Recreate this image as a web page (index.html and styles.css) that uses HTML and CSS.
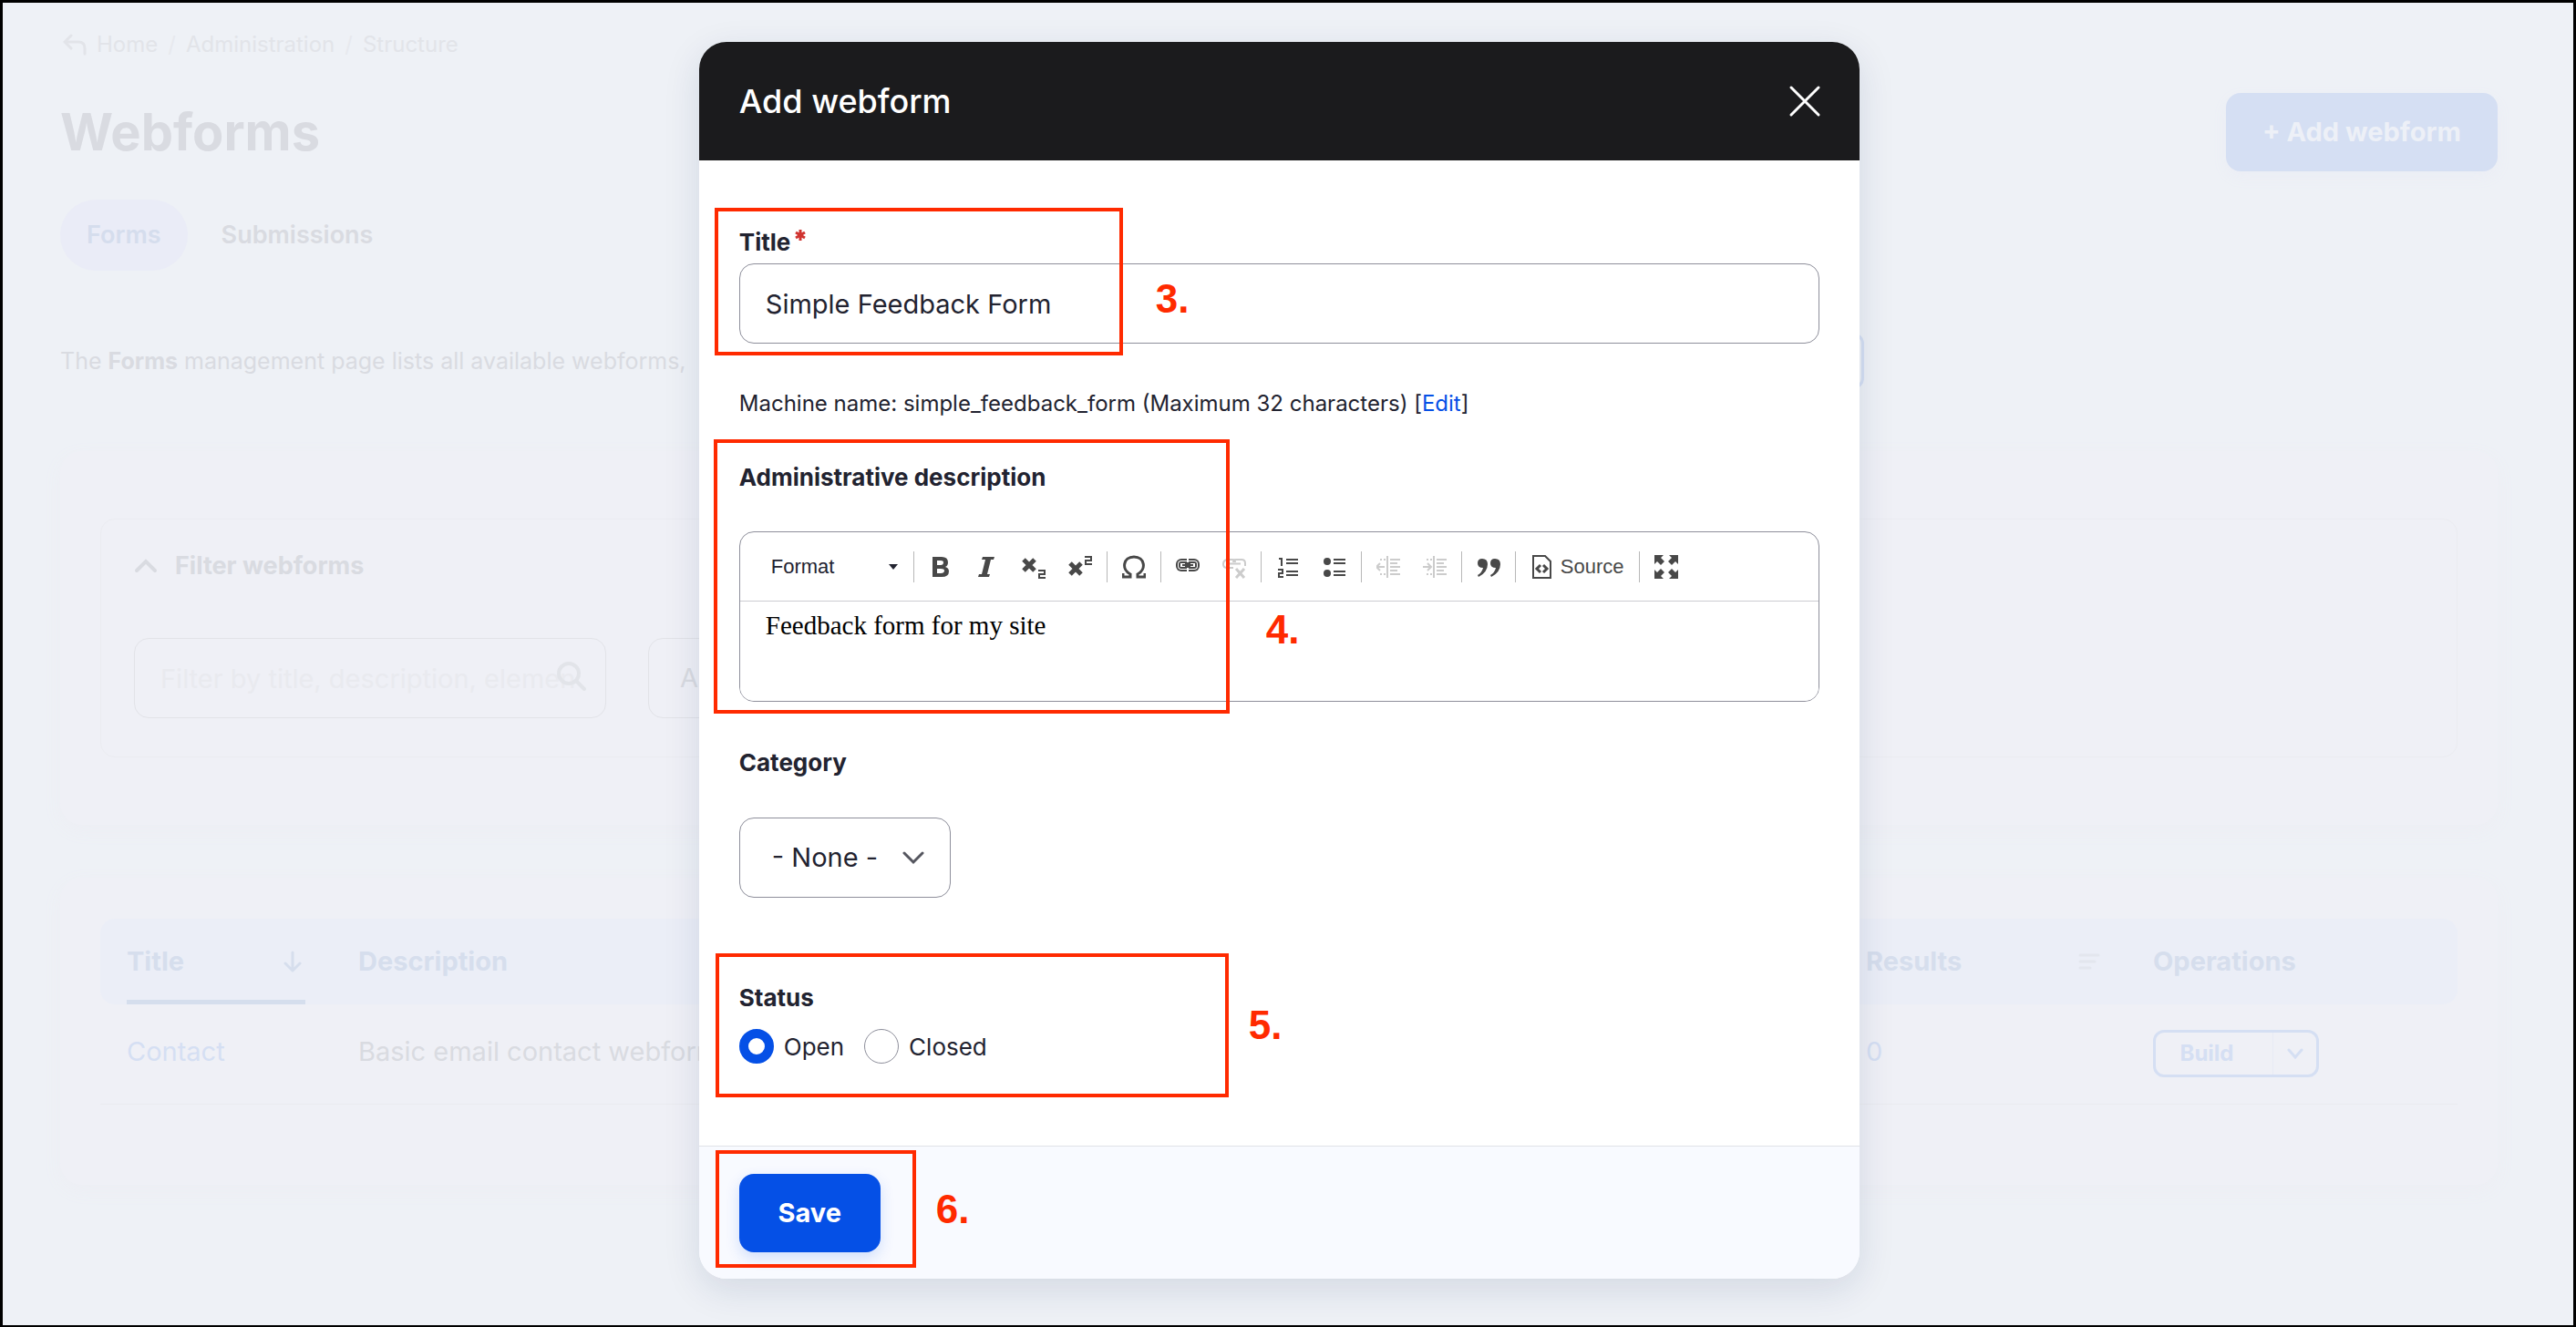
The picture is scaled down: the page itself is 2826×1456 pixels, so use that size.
FILE: index.html
```
<!DOCTYPE html>
<html lang="en">
<head>
<meta charset="utf-8">
<title>Add webform</title>
<link rel="stylesheet" href="styles.css">
</head>
<body>
<div class="page">
  <nav class="breadcrumb" aria-label="Breadcrumb">
    <svg width="26" height="24" viewBox="0 0 26 24" fill="none" stroke="currentColor" stroke-width="3" stroke-linecap="round" stroke-linejoin="round"><path d="M9 2 2 9l7 7M2 9h15q7 0 7 7v6"/></svg>
    <a href="#">Home</a><span class="slash">/</span><a href="#">Administration</a><span class="slash">/</span><a href="#">Structure</a>
  </nav>
  <header class="title-row">
    <h1>Webforms</h1>
    <button class="add-button" type="button">+ Add webform</button>
  </header>
  <nav class="tabs" aria-label="Tabs"><a class="active" href="#">Forms</a><a href="#">Submissions</a></nav>
  <div class="intro">
    <p>The <b>Forms</b> management page lists all available webforms,</p>
    <button class="video-button" type="button" aria-label="Video"></button>
  </div>
  <section class="card filter-card">
    <div class="filter">
      <h2>
        <svg width="26" height="16" viewBox="0 0 26 16" fill="none" stroke="currentColor" stroke-width="4" stroke-linecap="round"><path d="M3 13 13 3l10 10"/></svg>
        Filter webforms
      </h2>
      <div class="filter-fields">
        <div class="search">
          <input type="text" aria-label="Filter" placeholder="Filter by title, description, elemen">
          <svg width="32" height="32" viewBox="0 0 32 32" fill="none" stroke="currentColor" stroke-width="4" stroke-linecap="round"><circle cx="13" cy="13" r="11"/><path d="m21 21 9 9"/></svg>
        </div>
        <select aria-label="Category filter"><option>All</option></select>
      </div>
    </div>
  </section>
  <section class="card table-card">
    <table>
      <thead>
        <tr>
          <th class="col-title"><a class="sorted" href="#">Title
            <svg width="20" height="24" viewBox="0 0 20 24" fill="none" stroke="currentColor" stroke-width="3" stroke-linecap="round" stroke-linejoin="round"><path d="M10 2v20M2 14l8 8 8-8"/></svg></a></th>
          <th>Description</th>
          <th class="col-results"><a class="sortable" href="#">Results
            <svg width="24" height="18" viewBox="0 0 24 18" fill="none" stroke="currentColor" stroke-width="3" stroke-linecap="round"><path d="M2 2h20M2 9h16M2 16h11"/></svg></a></th>
          <th class="col-operations">Operations</th>
        </tr>
      </thead>
      <tbody>
        <tr>
          <td><a href="#">Contact</a></td>
          <td>Basic email contact webform.</td>
          <td><a href="#">0</a></td>
          <td>
            <div class="dropbutton">
              <button class="build" type="button">Build</button>
              <button class="toggle" type="button" aria-label="More"><svg width="18" height="12" viewBox="0 0 18 12" fill="none" stroke="currentColor" stroke-width="3" stroke-linecap="round"><path d="m2 2 7 8 7-8"/></svg></button>
            </div>
          </td>
        </tr>
      </tbody>
    </table>
  </section>
</div>

<div class="overlay">
  <form class="dialog" role="dialog" aria-labelledby="dialog-title">
    <header class="dialog-header">
      <h2 id="dialog-title">Add webform</h2>
      <button class="close" type="button" aria-label="Close"><svg width="36" height="36" viewBox="0 0 36 36" fill="none" stroke="currentColor" stroke-width="3" stroke-linecap="round"><path d="m3 3 30 30M33 3 3 33"/></svg></button>
    </header>
    <div class="dialog-body">
      <div class="field">
        <label for="title">Title<svg class="required" width="12" height="12" viewBox="0 0 12 12" stroke="currentColor" stroke-width="3"><path d="M6 0v12M1 3l10 6M11 3 1 9"/></svg></label>
        <input class="title-input" id="title" type="text" value="Simple Feedback Form">
        <div class="mark mark-title"><span>3.</span></div>
      </div>
      <p class="machine-name">Machine name: simple_feedback_form (Maximum 32 characters) [<a href="#">Edit</a>]</p>
      <div class="field field-description">
        <label for="description">Administrative description</label>
        <div class="editor">
          <div class="toolbar">
            <button class="format" type="button">Format<svg width="10" height="6" viewBox="0 0 10 6" fill="currentColor"><path d="M0 0h10L5 6z"/></svg></button>
            <div class="group">
              <button type="button" aria-label="Bold"><svg viewBox="0 0 26 26"><path fill="currentColor" fill-rule="evenodd" d="M4 2h10q7 0 7 6 0 4-3 5 4 1 4 5 0 6-8 6H4zM9 6v5h4q3 0 3-3 0-2-3-2zm0 9v5h4q4 0 4-3 0-2-4-2z"/></svg></button>
              <button type="button" aria-label="Italic"><svg viewBox="0 0 26 26"><path fill="currentColor" d="M8 2h13l-1 3h-3l-4 16h3l-1 3H3l1-3h3l4-16H7z"/></svg></button>
              <button type="button" aria-label="Subscript"><svg viewBox="0 0 26 26" fill="none" stroke="currentColor"><path stroke-width="5" d="m2 5 12 12M14 5 2 17"/><path stroke-width="2" d="M18 17h7v4h-6v4h7"/></svg></button>
              <button type="button" aria-label="Superscript"><svg viewBox="0 0 26 26" fill="none" stroke="currentColor"><path stroke-width="5" d="m2 9 12 12M14 9 2 21"/><path stroke-width="2" d="M18 2h7v4h-6v4h7"/></svg></button>
            </div>
            <div class="group">
              <button type="button" aria-label="Special character"><svg viewBox="0 0 26 26" fill="none" stroke="currentColor" stroke-width="3"><path d="M1 20v4h8v-3C-1 16 1 2 13 2s14 14 4 19v3h8v-4"/></svg></button>
            </div>
            <div class="group">
              <button type="button" aria-label="Link"><svg viewBox="0 0 26 26"><rect x="0" y="4" width="26" height="14" rx="6" fill="currentColor"/><rect x="2" y="6" width="22" height="10" rx="4" fill="#fff"/><rect x="3" y="7" width="20" height="8" rx="3" fill="currentColor"/><path fill="#fff" d="M5 9h5v1h6V9h5v4h-5v-1h-6v1H5z"/><path fill="currentColor" d="M7 10h12v2H7z"/><path fill="#fff" d="M12 4h2v4h-2zM12 14h2v4h-2z"/></svg></button>
              <button class="off" type="button" aria-label="Unlink"><svg viewBox="0 0 26 26" fill="none" stroke="currentColor" stroke-width="2"><path d="M12 14H5q-4 0-4-4t4-5h6q3 0 3 3M12 8q0-3 3-3h6q4 0 4 4v3M6 9.500h14"/><path stroke-width="3" d="m15 15 9 10M24 15l-9 10"/></svg></button>
            </div>
            <div class="group">
              <button type="button" aria-label="Numbered list"><svg viewBox="0 0 26 26" fill="none" stroke="currentColor" stroke-width="2"><path d="M3 4h3v8M2 16h5v4H3v4h5M11 5h13M11 9h13M11 18h13M11 22h13"/></svg></button>
              <button type="button" aria-label="Bulleted list"><svg viewBox="0 0 26 26" fill="none" stroke="currentColor" stroke-width="2"><circle cx="5" cy="7" r="4" fill="currentColor" stroke="none"/><circle cx="5" cy="20" r="4" fill="currentColor" stroke="none"/><path d="M12 5h13M12 9h13M12 18h13M12 22h13"/></svg></button>
            </div>
            <div class="group">
              <button class="off" type="button" aria-label="Decrease indent"><svg viewBox="0 0 26 26" fill="none" stroke="currentColor" stroke-width="2"><path d="M12 1v24M15 5h11M15 9h8M15 13h11M15 17h8M15 21h11M0 13h9M4 9l-4 4 4 4M4 5h2M8 5h2M4 21h2M8 21h2"/></svg></button>
              <button class="off" type="button" aria-label="Increase indent"><svg viewBox="0 0 26 26" fill="none" stroke="currentColor" stroke-width="2"><path d="M12 1v24M15 5h11M15 9h8M15 13h11M15 17h8M15 21h11M0 13h9M5 9l4 4-4 4M4 5h2M8 5h2M4 21h2M8 21h2"/></svg></button>
            </div>
            <div class="group">
              <button type="button" aria-label="Block quote"><svg viewBox="0 0 26 26" fill="currentColor"><path d="M6 4q6 0 6 6 0 9-10 14l-1-2q5-3 6-8-6 0-6-5t5-5zM20 4q6 0 6 6 0 9-10 14l-1-2q5-3 6-8-6 0-6-5t5-5z"/></svg></button>
            </div>
            <div class="group">
              <button class="source" type="button"><svg viewBox="0 0 26 26" fill="none" stroke="currentColor" stroke-width="2"><path d="M3 1h13l6 6v18H3z"/><path stroke-width="3" d="m11 11-4 4 4 4M14 11l4 4-4 4"/></svg>Source</button>
            </div>
            <div class="group">
              <button type="button" aria-label="Maximize"><svg viewBox="0 0 26 26" fill="currentColor"><path d="M0 0h10L7 3l4 4-4 4-4-4-3 3zM26 0v10l-3-3-4 4-4-4 4-4-3-3zM0 26V16l3 3 4-4 4 4-4 4 3 3zM26 26H16l3-3-4-4 4-4 4 4 3-3z"/></svg></button>
            </div>
          </div>
          <textarea id="description" rows="2">Feedback form for my site</textarea>
        </div>
        <div class="mark mark-description"><span>4.</span></div>
      </div>
      <div class="field field-category">
        <label for="category">Category</label>
        <div class="select">
          <select id="category"><option>- None -</option></select>
          <svg width="24" height="16" viewBox="0 0 24 16" fill="none" stroke="currentColor" stroke-width="3" stroke-linecap="round"><path d="m2 3 10 10L22 3"/></svg>
        </div>
      </div>
      <fieldset class="status">
        <legend>Status</legend>
        <div class="options">
          <input id="open" type="radio" name="status" checked><label for="open">Open</label>
          <input id="closed" type="radio" name="status"><label for="closed">Closed</label>
          <div class="mark mark-status"><span>5.</span></div>
        </div>
      </fieldset>
    </div>
    <footer class="dialog-footer">
      <button class="save" type="submit">Save</button>
      <div class="mark mark-save"><span>6.</span></div>
    </footer>
  </form>
</div>
</body>
</html>
```
FILE: styles.css
```
* { box-sizing: border-box; }

body {
  margin: 0;
  min-height: 100vh;
  display: grid;
  border: 3px solid #000;
  background: #eef1f6;
  color: #d9dbe1;
  font-family: Inter, "Liberation Sans", sans-serif;
  font-size: 29px;
  line-height: 40px;
}

h1, h2, p { margin: 0; }
a { color: inherit; text-decoration: none; }
button, input, select, textarea { font: inherit; color: inherit; margin: 0; }
button { border: 0; padding: 0; background: none; }
svg { display: block; flex: none; }

/* The page and the dialog share one grid cell, the dialog on top */
.page, .overlay { grid-area: 1 / 1; min-width: 0; }

.page { padding: 30px 83px 64px 63px; }

.breadcrumb {
  display: flex;
  align-items: center;
  gap: 11px;
  height: 32px;
  padding-left: 3px;
  font-size: 24px;
  color: #e2e4e9;
}
.slash { color: #e7e9ee; }

.title-row {
  display: flex;
  justify-content: space-between;
  align-items: center;
  height: 86px;
  margin-top: 37px;
}
h1 { font-size: 56px; font-weight: 700; line-height: 72px; }
.add-button {
  width: 298px;
  height: 86px;
  border-radius: 16px;
  background: #d5dff3;
  color: #edf0f7;
  font-weight: 700;
  box-shadow: 0 6px 16px #ebedf5;
}

.tabs {
  display: flex;
  gap: 8px;
  margin-top: 31px;
  font-size: 27px;
  font-weight: 600;
}
.tabs a { padding: 19px 29px; border-radius: 40px; line-height: 40px; }
.tabs .active { background: #eaecf7; color: #d5dded; }

.intro {
  display: flex;
  align-items: center;
  justify-content: space-between;
  width: 74%;
  height: 62px;
  margin-top: 68px;
  font-size: 25px;
}
.video-button {
  width: 160px;
  height: 62px;
  border: 3px solid #d5dff3;
  border-radius: 12px;
}

.card {
  border-radius: 24px;
  background: #eff0f6;
  box-shadow: 0 6px 20px #edeef4;
}
.filter-card { margin-top: 68px; padding: 74px 44px; }
.filter {
  border: 1px solid #ebecf1;
  border-radius: 16px;
  padding: 32px 36px 42px;
}
.filter h2 {
  display: flex;
  align-items: center;
  gap: 19px;
  font-size: 27px;
  font-weight: 700;
  line-height: 38px;
}
.filter-fields { display: flex; gap: 46px; margin-top: 60px; }
.search { position: relative; width: 518px; }
.search input, .filter-fields select {
  width: 100%;
  height: 88px;
  border: 1px solid #e2e3e8;
  border-radius: 16px;
  padding: 0 28px;
  background: transparent;
}
.search input::placeholder { color: #e9eaef; opacity: 1; }
.search svg { position: absolute; right: 22px; top: 26px; color: #e2e4e9; }
.filter-fields select { width: 300px; appearance: none; padding: 0 34px; }

.table-card { margin-top: 58px; padding: 45px 44px 88px; }
table { width: 100%; border-collapse: collapse; table-layout: fixed; }
th {
  height: 94px;
  padding: 0 29px;
  text-align: left;
  font-weight: 700;
  color: #d6deed;
  background: #ebeef7;
}
th:first-child { border-radius: 16px 0 0 16px; }
th:last-child { border-radius: 0 16px 16px 0; }
.col-title { width: 254px; }
.col-results { width: 315px; }
.col-operations { width: 363px; }
.sorted, .sortable { display: flex; justify-content: space-between; align-items: center; }
.sorted { height: 94px; border-bottom: 5px solid #d5deed; padding-top: 5px; padding-right: 4px; }
.sortable svg { color: #e3e6ee; }
td { height: 109px; padding: 0 29px 4px; border-bottom: 1px solid #eaebf0; }
td:last-child { padding-bottom: 0; }
td a { color: #d5dff3; }
.dropbutton {
  display: flex;
  width: 182px;
  height: 52px;
  border: 3px solid #d5dff3;
  border-radius: 12px;
  color: #d5dff3;
}
.build { flex: 1; padding-right: 16px; font-size: 24px; font-weight: 700; }
.toggle { width: 48px; border-left: 1px solid #e7ebf5; display: grid; place-items: center; }

.overlay {
  position: relative;
  display: grid;
  justify-items: center;
  align-items: start;
  padding: 43px 19px 51px 0;
}
.dialog {
  width: calc(45% + 13px);
  min-width: 1240px;
  border-radius: 30px;
  background: #fff;
  color: #222330;
  box-shadow: 0 12px 40px rgba(20, 45, 90, .12);
}
.dialog-header {
  display: flex;
  justify-content: space-between;
  align-items: center;
  height: 130px;
  padding: 0 42px 0 44px;
  border-radius: 30px 30px 0 0;
  background: #1b1b1d;
  color: #fff;
}
.dialog-header h2 { font-size: 36px; font-weight: 500; line-height: 48px; }

.dialog-body { padding: 70px 44px 90px; }
.field, .options, .dialog-footer { position: relative; }
.field > label, legend {
  display: flex;
  padding: 0;
  font-size: 26px;
  font-weight: 700;
  line-height: 40px;
}
.required { margin: 6px 0 0 5px; color: #d0332f; }
.title-input {
  display: block;
  width: 100%;
  height: 88px;
  margin-top: 3px;
  padding: 0 28px;
  border: 1px solid #8e8f9b;
  border-radius: 16px;
  background: #fff;
}
.machine-name { margin-top: 46px; font-size: 24px; line-height: 40px; }
.machine-name a { color: #0550e6; }

.field-description { margin-top: 41px; }
.editor {
  margin-top: 39px;
  border: 1px solid #8e8f9b;
  border-radius: 16px;
  overflow: hidden;
}
.toolbar {
  display: flex;
  align-items: center;
  height: 76px;
  padding-left: 34px;
  border-bottom: 1px solid #ccccd1;
  color: #484848;
  font: 22px/32px "Liberation Sans", Arial, sans-serif;
}
.toolbar svg { width: 26px; height: 26px; }
.format {
  display: flex;
  justify-content: space-between;
  align-items: center;
  width: 139px;
  margin-right: 17px;
  color: #222330;
}
.toolbar .format svg { width: 10px; height: 6px; }
.group {
  display: flex;
  gap: 25px;
  height: 34px;
  align-items: center;
  padding: 0 16px;
  border-left: 1px solid #b8b8b8;
}
.off { color: #ccc; }
.source { display: flex; align-items: center; gap: 7px; }
.editor textarea {
  display: block;
  width: 100%;
  height: 109px;
  border: 0;
  padding: 7px 28px;
  resize: none;
  color: #000;
  background: #fff;
  font: 29px/38px "Liberation Serif", "Times New Roman", serif;
}

.field-category { margin-top: 47px; }
.select { position: relative; width: 232px; margin-top: 40px; }
.select select {
  display: block;
  width: 100%;
  height: 88px;
  appearance: none;
  padding: 0 35px;
  border: 1px solid #8e8f9b;
  border-radius: 16px;
  background: #fff;
}
.select svg { position: absolute; right: 29px; top: 36px; color: #55565f; }

.status { margin: 90px 0 0; padding: 0; border: 0; min-width: 0; }
.options {
  display: flex;
  align-items: center;
  height: 38px;
  margin-top: 14px;
  font-size: 26px;
}
.options input {
  appearance: none;
  width: 38px;
  height: 38px;
  border: 1px solid #8e8f9b;
  border-radius: 50%;
  background: #fff;
}
.options input:checked { border: 10px solid #0550e6; }
.options label { padding: 2px 22px 0 11px; }

.dialog-footer {
  padding: 30px 44px 29px;
  border-top: 1px solid #e0e1e6;
  border-radius: 0 0 30px 30px;
  background: #f8faff;
}
.save {
  display: block;
  width: 155px;
  height: 86px;
  border-radius: 16px;
  background: #0550e6;
  color: #fff;
  font-weight: 700;
  box-shadow: 0 6px 16px rgba(5, 80, 230, .16);
}

/* Numbered step callouts drawn over the form */
.mark {
  position: absolute;
  display: flex;
  align-items: center;
  border: 4px solid #ff2a00;
  color: #ff2a00;
  font: bold 44px/48px "Liberation Sans", Arial, sans-serif;
  pointer-events: none;
}
.mark span { position: absolute; left: 100%; }
.mark-title { left: -27px; top: -18px; width: 448px; height: 162px; }
.mark-title span { padding-left: 40px; top: 72px; }
.mark-description { left: -28px; top: -22px; width: 566px; height: 301px; }
.mark-description span { padding-left: 44px; top: 181px; }
.mark-status { left: -26px; top: -83px; width: 563px; height: 158px; }
.mark-status span { padding-left: 26px; }
.mark-save { left: 18px; top: 4px; width: 220px; height: 129px; }
.mark-save span { padding-left: 26px; }
```
